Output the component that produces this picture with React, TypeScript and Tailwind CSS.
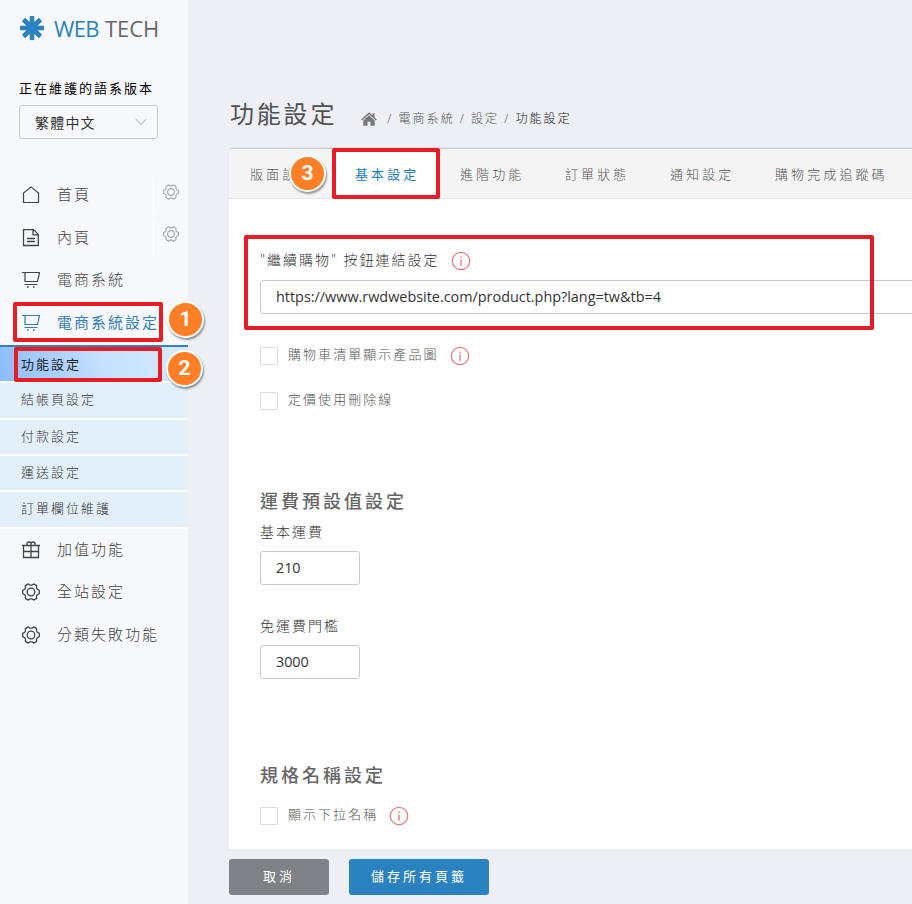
import { ReactNode } from 'react';
import clsx from 'clsx';

type IconProps = { className?: string };

// outline of a six-tooth gear
const gearPoints = Array.from({ length: 6 }, (_, i) =>
  [
    [-22, 6.9],
    [-12, 8.5],
    [12, 8.5],
    [22, 6.9],
  ].map(([deg, r]) => {
    const a = ((i * 60 + deg) * Math.PI) / 180;
    return `${(9 + r * Math.cos(a)).toFixed(2)},${(9 + r * Math.sin(a)).toFixed(2)}`;
  })
)
  .flat()
  .join(' ');

function GearIcon({ className }: IconProps) {
  return (
    <svg viewBox="0 0 18 18" fill="none" stroke="currentColor" strokeLinejoin="round" className={className}>
      <polygon points={gearPoints} strokeWidth="1.3" />
      <circle cx="9" cy="9" r="3.8" strokeWidth="1.3" />
    </svg>
  );
}

function HomeOutlineIcon({ className }: IconProps) {
  return (
    <svg viewBox="0 0 18 18" fill="none" stroke="currentColor" strokeWidth="1.2" className={className}>
      <path d="M1.5 16.5V7L9 .9 16.500 7v9.5z" />
    </svg>
  );
}

function PageIcon({ className }: IconProps) {
  return (
    <svg viewBox="0 0 18 18" fill="none" stroke="currentColor" strokeWidth="1.3" className={className}>
      <path d="M1.5 .6h10l4.800 4.800v11.100H1.5zM11 .9v5h5M5 9.500h8M5 12.500h8" />
    </svg>
  );
}

function CartIcon({ className }: IconProps) {
  return (
    <svg viewBox="0 0 18 18" fill="none" stroke="currentColor" strokeWidth="1.2" className={className}>
      <path d="M0 1.500h17.500L15.500 10.500H3V1.500M2.500 13.500h13" />
      <path d="M5 16h1.600M11 16h1.600" strokeWidth="1.6" />
    </svg>
  );
}

function GiftIcon({ className }: IconProps) {
  return (
    <svg viewBox="0 0 18 18" fill="none" stroke="currentColor" strokeWidth="1.3" className={className}>
      <path d="M0 4.500h18M1.500 4.500v12h15v-12M1.500 10.500h15M9 4.500v12M5 4.300V2.800Q5 1 7 1t2 1.800v1.500M9 4.300V2.800Q9 1 11 1t2 1.800v1.500" />
    </svg>
  );
}

function InfoIcon({ className }: IconProps) {
  return (
    <svg viewBox="0 0 20 20" className={clsx('h-5 w-5 text-[#e27d7b]', className)}>
      <circle cx="10" cy="10" r="8.7" fill="none" stroke="currentColor" strokeWidth="1.2" />
      <path d="M10 5.6v1.7M10 8.7v6" stroke="currentColor" strokeWidth="1.4" />
    </svg>
  );
}

function Badge({ children, className }: { children: ReactNode; className: string }) {
  return (
    <span
      className={clsx(
        'absolute flex h-[37px] w-[37px] items-center justify-center rounded-full border-2 border-white bg-[#ff7f27] font-[Roboto,sans-serif] text-[21px] font-bold text-white shadow-[1px_2px_2px_rgba(0,0,0,0.4)]',
        className
      )}
    >
      {children}
    </span>
  );
}

function NavRow({ icon, label, gear, active }: { icon: ReactNode; label: string; gear?: boolean; active?: boolean }) {
  return (
    <div className={clsx('flex h-[42.6px] items-center pl-[22px]', active ? 'text-[#337fb7]' : 'text-[#444]')}>
      <span className="w-[35px]">{icon}</span>
      <span className={clsx('whitespace-nowrap pb-0.5 text-[15px] tracking-[2px]', active ? 'font-normal' : 'font-light')}>{label}</span>
      {gear && (
        <span className="ml-auto flex h-[35px] w-[35px] justify-center border-l border-white pt-1.5">
          <GearIcon className="h-4 w-4 text-[#a8a8ac]" />
        </span>
      )}
    </div>
  );
}

function Checkbox({ label, info }: { label: string; info?: boolean }) {
  return (
    <label className="flex h-5 items-center">
      <span className="h-[18px] w-[18px] rounded-[1px] border border-[#dcdcdf]" />
      <span className="ml-2.5 pb-1 text-[13px] font-light leading-5 tracking-[2.05px] text-[#555]">{label}</span>
      {info && <InfoIcon className="ml-[11px]" />}
    </label>
  );
}

const subItems = ['結帳頁設定', '付款設定', '運送設定', '訂單欄位維護'];
const tabs = ['版面設定', '基本設定', '進階功能', '訂單狀態', '通知設定', '購物完成追蹤碼'];
const iconSize = 'h-[18px] w-[18px]';

function Sidebar() {
  return (
    <aside className="h-full w-[188px] shrink-0 bg-[#f7f8fb]">
      {/* Logo */}
      <div className="flex h-14 items-center pl-5">
        <svg viewBox="-12 -12 24 24" className="h-6 w-6 text-[#2b82c0]">
          <path d="M0-12V12M-12 0H12M-8.5-8.5L8.5 8.5M8.5-8.5L-8.5 8.5" stroke="currentColor" strokeWidth="4.6" />
        </svg>
        <div className="ml-2.5 flex gap-1 whitespace-nowrap font-['Open_Sans',sans-serif] text-[22px] leading-8 text-[#666]">
          <span className="w-[47px] font-medium tracking-[-0.6px] text-[#2b82c0]">WEB</span>
          <span className="tracking-[-0.1px]">TECH</span>
        </div>
      </div>

      {/* Language */}
      <div className="px-[19px] pt-[22px]">
        <p className="whitespace-nowrap text-[13px] leading-5 tracking-[2px] text-black">正在維護的語系版本</p>
        <div className="mt-[7px] flex h-[34px] w-[139px] items-center justify-between rounded-[3px] border border-[#c5c8d0] pl-[15px] pr-2.5 text-[14px] tracking-[1.2px] text-[#333]">
          繁體中文
          <svg viewBox="0 0 12 8" fill="none" stroke="#c3c3c8" strokeWidth="1.2" className="h-2 w-3">
            <path d="M.8 1.2L6 6.5l5.2-5.3" />
          </svg>
        </div>
      </div>

      {/* Menu */}
      <nav className="mt-[35px]">
        <NavRow icon={<HomeOutlineIcon className={iconSize} />} label="首頁" gear />
        <NavRow icon={<PageIcon className={iconSize} />} label="內頁" gear />
        <NavRow icon={<CartIcon className={iconSize} />} label="電商系統" />
        <NavRow icon={<CartIcon className={iconSize} />} label="電商系統設定" active />
        <div className="pt-px text-[13px] tracking-[2px]">
          <div className="flex h-9 items-center border-t-2 border-[#3a7fb3] bg-[linear-gradient(75deg,#8bbcff,#c5e1ff_55%,#d6eafc)] pl-[21px] text-[#222]">
            功能設定
          </div>
          {subItems.map((item) => (
            <div key={item} className="flex h-[36.3px] items-center border-t-2 border-white bg-[#e3eff8] pb-px pl-[21px] font-light text-[#333]">
              {item}
            </div>
          ))}
          <div className="h-0.5 bg-white" />
        </div>
        <NavRow icon={<GiftIcon className={iconSize} />} label="加值功能" />
        <NavRow icon={<GearIcon className={iconSize} />} label="全站設定" />
        <NavRow icon={<GearIcon className={iconSize} />} label="分類失敗功能" />
      </nav>
    </aside>
  );
}

function Field({ label, value, className }: { label: string; value: string; className?: string }) {
  return (
    <div className={className}>
      <p className="text-[14px] font-light leading-5 tracking-[2px] text-[#333]">{label}</p>
      <div className="mt-[9px] flex h-[34px] w-[100px] items-center rounded-[3px] border border-[#c5c8d0] pl-[15px] font-['Open_Sans',sans-serif] text-[14.4px] tracking-[-0.1px] text-[#333]">
        {value}
      </div>
    </div>
  );
}

export default function App() {
  return (
    <div className="relative flex h-[904px] w-[912px] overflow-hidden bg-[#edeff4] font-['Open_Sans','Noto_Sans_CJK_TC',sans-serif]">
      <Sidebar />

      <main className="w-[724px] pl-[41px]">
        {/* Title and breadcrumb */}
        <header className="flex h-[149px] pt-24">
          <h1 className="h-9 whitespace-nowrap pl-px text-[24px] leading-9 tracking-[2.8px] text-[#505050]">功能設定</h1>
          <div className="ml-6 mt-[13px] flex h-5 items-center gap-[5px] whitespace-nowrap text-[12px] font-light tracking-[2.1px] text-[#555]">
            <svg viewBox="0 0 16 14" className="mr-[5px] h-[14px] w-4 text-[#777]" fill="currentColor">
              <path d="M8 .3L.2 7.5l.9.9L8 2.2l6.900 6.200.9-.9L13.500 5.400V1.200h-2v2.300zM8 3.300L2.300 8.400V13.700h4.200V9.700h3v4h4.200V8.400z" />
            </svg>
            <span>/</span>
            <span>電商系統</span>
            <span>/</span>
            <span>設定</span>
            <span>/</span>
            <span className="text-[#111]">功能設定</span>
          </div>
        </header>

        <section className="h-[700px] w-[700px] rounded-tl-[4px] bg-white shadow-[0_-2px_2px_-1px_rgba(0,0,0,0.2)]">
          {/* Tabs */}
          <div className="flex h-[50px] rounded-tl-[4px] border-b border-[#e5e5e8] bg-[#f4f4f4]">
            {tabs.map((tab, i) => (
              <div
                key={tab}
                className={clsx(
                  'flex items-center whitespace-nowrap pl-[21px] pt-[3px] text-[13px] tracking-[3.1px]',
                  i === 5 ? 'w-[175px]' : 'w-[105px]',
                  i === 1 ? 'bg-white font-normal text-[#1b7bc0]' : 'font-light text-[#555]'
                )}
              >
                {tab}
              </div>
            ))}
          </div>

          {/* Settings */}
          <div className="pl-[31px] pt-[51px]">
            <div className="flex h-5 items-center">
              <p className="whitespace-nowrap text-[14px] font-light leading-5 tracking-[2px] text-[#333]">"繼續購物" 按鈕連結設定</p>
              <InfoIcon className="ml-[11px] mt-0.5" />
            </div>
            <div className="mt-2.5 flex h-[34px] w-[669px] items-center rounded-l-[3px] border border-[#c5c8d0] pl-[15px] font-['Open_Sans',sans-serif] text-[14.4px] text-[#333]">
              https://www.rwdwebsite.com/product.php?lang=tw&amp;tb=4
            </div>
            <div className="mt-8">
              <Checkbox label="購物車清單顯示產品圖" info />
            </div>
            <div className="mt-[25px]">
              <Checkbox label="定價使用刪除線" />
            </div>

            <h2 className="mt-[78px] text-[18px] font-medium leading-6 tracking-[3px] text-[#666]">運費預設值設定</h2>
            <Field label="基本運費" value="210" className="mt-[9px]" />
            <Field label="免運費門檻" value="3000" className="mt-[31px]" />

            <h2 className="mb-[19px] mt-[84px] text-[18px] font-medium leading-6 tracking-[3px] text-[#666]">規格名稱設定</h2>
            <Checkbox label="顯示下拉名稱" info />
          </div>
        </section>

        {/* Actions */}
        <div className="mt-2.5 flex gap-5 text-[13px] tracking-[3px] text-white">
          <button className="h-9 w-[100px] rounded-[3px] bg-[#7e8186]">取消</button>
          <button className="h-9 w-[140px] rounded-[3px] bg-[#2b82c0]">儲存所有頁籤</button>
        </div>
      </main>

      {/* Step markers */}
      <div className="absolute left-[13px] top-[302px] h-10 w-[150px] rounded-[2px] border-4 border-[#e61c26]" />
      <div className="absolute left-[14px] top-[347px] h-[35px] w-[148px] rounded-[2px] border-4 border-[#e61c26]" />
      <div className="absolute left-[332px] top-[148px] h-[51px] w-[108px] rounded-[2px] border-4 border-[#e61c26]" />
      <div className="absolute left-[244px] top-[235px] h-[95px] w-[630px] rounded-[2px] border-4 border-[#e61c26]" />
      <Badge className="left-[167px] top-[301px]">1</Badge>
      <Badge className="left-[166px] top-[350px]">2</Badge>
      <Badge className="left-[289px] top-[155px]">3</Badge>
    </div>
  );
}
